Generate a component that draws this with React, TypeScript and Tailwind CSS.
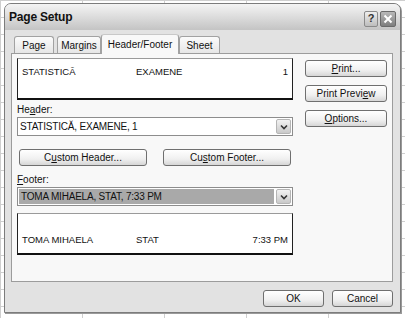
const font = { fontFamily: '"Liberation Sans", Arial, sans-serif' }

function Btn({ label, u, className = '' }: { label: string; u?: number; className?: string }) {
  const text =
    u === undefined ? (
      label
    ) : (
      <>
        {label.slice(0, u)}
        <span className="underline">{label[u]}</span>
        {label.slice(u + 1)}
      </>
    )
  return (
    <div
      className={`flex items-center justify-center rounded-[3px] border border-[#6f6f6f] bg-[linear-gradient(#ffffff,#f0f0f0_60%,#d6d6d6)] text-[10px] text-[#111] ${className}`}
    >
      {text}
    </div>
  )
}

function Select({ value, selected }: { value: string; selected?: boolean }) {
  return (
    <div className="flex h-[19px] items-stretch border border-[#8d8d8d] bg-white">
      <div
        className={`flex flex-1 items-center pl-[2px] text-[10px] tracking-[-0.2px] text-[#111] ${selected ? 'm-[1px] bg-[#a9a9a9]' : ''}`}
      >
        {value}
      </div>
      <div className="m-[1px] flex w-[15px] items-center justify-center rounded-[2px] border border-[#b5b5b5] bg-[linear-gradient(#f2f2f2,#c9c9c9)]">
        <svg width="8" height="6" viewBox="0 0 8 6">
          <path d="M1 1.5 L4 4.5 L7 1.5" fill="none" stroke="#333" strokeWidth="1.6" />
        </svg>
      </div>
    </div>
  )
}

function Preview({ left, mid, right, bottom }: { left: string; mid: string; right: string; bottom?: boolean }) {
  return (
    <div
      className={`flex h-[42px] border-x-[1.5px] border-b-[2px] border-t border-x-[#222] border-b-[#111] border-t-[#9a9a9a] bg-white px-[4px] text-[9.5px] text-[#111] ${bottom ? 'items-end pb-[6px]' : 'items-start pt-[6px]'}`}
    >
      <span className="w-[114px]">{left}</span>
      <span className="flex-1">{mid}</span>
      <span>{right}</span>
    </div>
  )
}

export default function App() {
  return (
    <div
      className="h-[318px] w-[405px] overflow-hidden bg-white bg-[linear-gradient(#cfcfcf_1px,transparent_1px),linear-gradient(90deg,#cfcfcf_1px,transparent_1px)] bg-[size:82px_17px] pl-[4px] pt-[3px]"
      style={font}
    >
      <div className="flex h-[310px] w-[397px] flex-col rounded-t-[7px] border border-[#7c7c7c] bg-[#e2e2e2] shadow-[1px_1px_0_#9a9a9a]">
        <div className="flex h-[26px] items-center justify-between rounded-t-[6px] bg-[linear-gradient(#f4f4f4,#dcdcdc_50%,#c4c4c4)] pl-[4px] pr-[4px]">
          <span className="text-[12px] font-bold tracking-[-0.2px] text-[#111]">Page Setup</span>
          <div className="flex gap-[2px] pt-[3px]">
            <div className="flex h-[16px] w-[14px] items-center justify-center rounded-[2px] border border-[#8a8a8a] bg-[linear-gradient(#eeeeee,#bdbdbd)] text-[11px] font-bold text-[#333]">
              ?
            </div>
            <div className="flex h-[16px] w-[16px] items-center justify-center rounded-[2px] border border-[#6a6a6a] bg-[linear-gradient(#b8b8b8,#7e7e7e)]">
              <svg width="10" height="10" viewBox="0 0 10 10">
                <path d="M1.5 1.5 L8.5 8.5 M8.5 1.5 L1.5 8.5" stroke="#fff" strokeWidth="2" />
              </svg>
            </div>
          </div>
        </div>

        <div className="flex flex-1 flex-col px-[6px] pt-[3px]">
          <div className="flex h-[20px] items-end pl-[3px] text-[10px] text-[#111]">
            <div className="flex h-[17px] w-[40px] items-center justify-center rounded-t-[3px] border border-b-0 border-[#a2a2a2] bg-[linear-gradient(#fbfbfb,#e6e6e6)]">
              Page
            </div>
            <div className="ml-[3px] flex h-[17px] w-[44px] items-center justify-center rounded-t-[3px] border border-b-0 border-[#a2a2a2] bg-[linear-gradient(#fbfbfb,#e6e6e6)]">
              Margins
            </div>
            <div className="relative top-[1px] z-10 flex h-[20px] w-[78px] items-center justify-center rounded-t-[3px] border border-b-0 border-[#a2a2a2] border-t-[#c8c8c8] bg-[#f8f8f8]">
              Header/Footer
            </div>
            <div className="flex h-[17px] w-[41px] items-center justify-center rounded-t-[3px] border border-b-0 border-[#a2a2a2] bg-[linear-gradient(#fbfbfb,#e6e6e6)]">
              Sheet
            </div>
          </div>

          <div className="flex h-[229px] w-[382px] border border-[#9c9c9c] bg-[#f8f8f8] pl-[5px] pt-[4px]">
            <div className="flex w-[276px] flex-col">
              <Preview left="STATISTICĂ" mid="EXAMENE" right="1" />
              <div className="mt-[3px] h-[14px] text-[10px] leading-[14px] text-[#111]">
                He<span className="underline">a</span>der:
              </div>
              <Select value="STATISTICĂ, EXAMENE, 1" />
              <div className="mt-[13px] flex justify-between px-[2px]">
                <Btn label="Custom Header..." u={1} className="h-[17px] w-[128px]" />
                <Btn label="Custom Footer..." u={2} className="h-[17px] w-[128px]" />
              </div>
              <div className="mt-[6px] h-[15px] text-[10px] leading-[15px] text-[#111]">
                <span className="underline">F</span>ooter:
              </div>
              <Select value="TOMA MIHAELA, STAT, 7:33 PM" selected />
              <div className="mt-[7px]">
                <Preview left="TOMA MIHAELA" mid="STAT" right="7:33 PM" bottom />
              </div>
            </div>
            <div className="ml-[12px] flex flex-col gap-[8px] pt-[2px]">
              <Btn label="Print..." u={0} className="h-[17px] w-[82px]" />
              <Btn label="Print Preview" u={11} className="h-[17px] w-[82px]" />
              <Btn label="Options..." u={0} className="h-[17px] w-[82px]" />
            </div>
          </div>

          <div className="flex justify-end gap-[8px] pr-[1px] pt-[8px]">
            <Btn label="OK" className="h-[17px] w-[61px]" />
            <Btn label="Cancel" className="h-[17px] w-[61px]" />
          </div>
        </div>
      </div>
    </div>
  )
}
